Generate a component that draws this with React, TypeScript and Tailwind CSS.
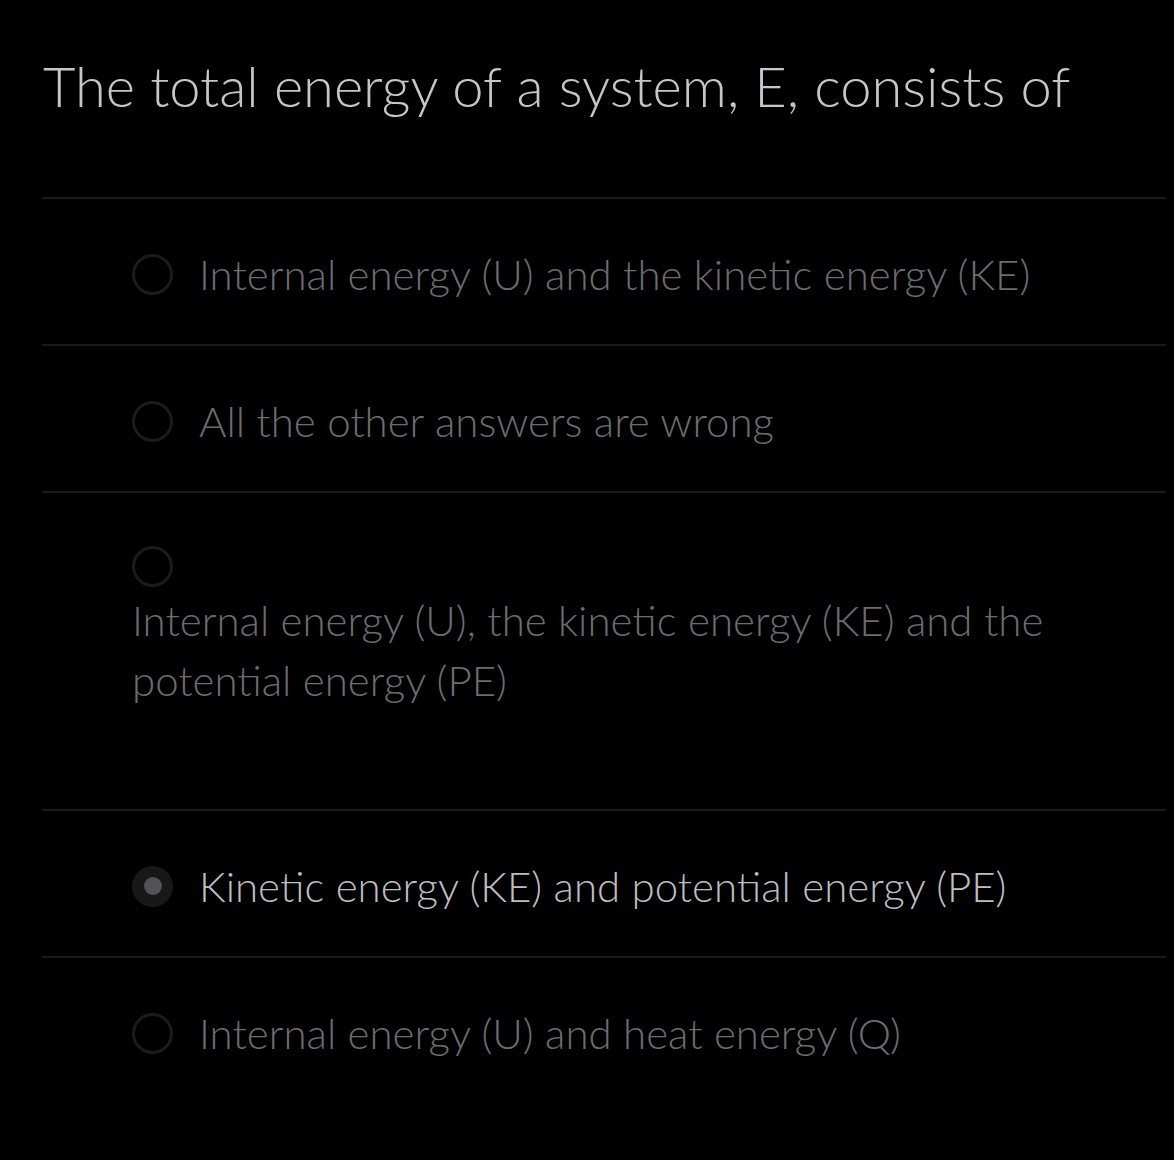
const font = { fontFamily: "'Lato Light', Lato, 'Open Sans', sans-serif" };

type Option = { label: string; selected?: boolean; stacked?: boolean };

const options: Option[] = [
  { label: "Internal energy (U) and the kinetic energy (KE)" },
  { label: "All the other answers are wrong" },
  { label: "Internal energy (U), the kinetic energy (KE) and the potential energy (PE)", stacked: true },
  { label: "Kinetic energy (KE) and potential energy (PE)", selected: true },
  { label: "Internal energy (U) and heat energy (Q)" },
];

function Radio({ selected }: { selected?: boolean }) {
  if (selected) {
    return (
      <span className="flex h-[41px] w-[41px] shrink-0 items-center justify-center rounded-full bg-[#181818]">
        <span className="h-[18px] w-[18px] rounded-full bg-[#535357]" />
      </span>
    );
  }
  return <span className="block h-[41px] w-[41px] shrink-0 rounded-full border-[3px] border-[#1b1b1b]" />;
}

export default function App() {
  return (
    <div className="min-h-[1160px] w-full bg-black" style={font}>
      <div className="pl-[42px] pr-[8px]">
        <h1 className="pt-[51px] pb-[76px] pl-[1px] text-[56px] font-light leading-[70px] text-[#c6c6c8]">
          The total energy of a system, E, consists of
        </h1>

        <div className="border-t-2 border-[#1a1a1a]">
          {options.map((o, i) => (
            <div
              key={i}
              className={
                i < options.length - 1
                  ? "border-b-2 border-[#1a1a1a] pl-[90px] pr-[100px]"
                  : "pl-[90px] pr-[100px]"
              }
            >
              {o.stacked ? (
                <div className="pt-[53px] pb-[99px]">
                  <Radio />
                  <p className="mt-[3px] text-[42px] font-light leading-[60px] text-[#6c6c6e]">{o.label}</p>
                </div>
              ) : (
                <div className="flex items-center gap-[26px] pt-[45px] pb-[40px]">
                  <Radio selected={o.selected} />
                  <span
                    className={
                      o.selected
                        ? "text-[42px] font-light leading-[60px] text-[#bebec0]"
                        : "text-[42px] font-light leading-[60px] text-[#6c6c6e]"
                    }
                  >
                    {o.label}
                  </span>
                </div>
              )}
            </div>
          ))}
        </div>
      </div>
    </div>
  );
}
